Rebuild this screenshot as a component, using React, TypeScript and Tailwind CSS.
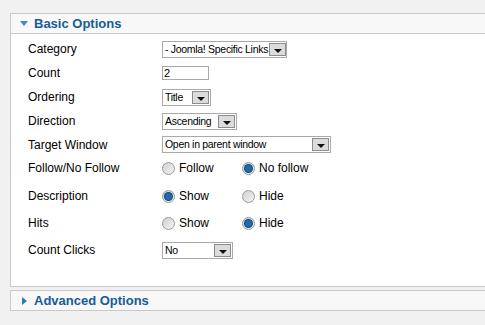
import React from 'react';

const font = { fontFamily: '"Liberation Sans", Arial, sans-serif' };

const Select: React.FC<{ value: string; width: string }> = ({ value, width }) => (
  <div className={`flex h-[17px] items-center justify-between border border-[#a9a9a9] bg-white pl-[2px] pr-[1px] ${width}`}>
    <span className="text-[10.5px] leading-[13px] tracking-[-0.3px] text-black whitespace-nowrap">{value}</span>
    <div className="ml-[1px] flex h-[13px] w-[17px] shrink-0 items-end justify-center border border-[#8c8c8c] bg-[#dcdcdc] pb-[2px]">
      <div className="h-0 w-0 border-x-[4px] border-t-[4px] border-x-transparent border-t-[#111]" />
    </div>
  </div>
);

const Radio: React.FC<{ checked?: boolean; label: string }> = ({ checked, label }) => (
  <div className="flex items-center gap-[4px]">
    <div className="flex h-[13px] w-[13px] items-center justify-center rounded-full border border-[#9a9a9a] bg-gradient-to-br from-[#d0d0d0] to-[#f4f4f4]">
      {checked && <div className="h-[7px] w-[7px] rounded-full bg-[#1f6aa8] ring-1 ring-[#0d4a7f]" />}
    </div>
    <span className="text-[12px] text-black">{label}</span>
  </div>
);

const Row: React.FC<{ label: string; h: string; children: React.ReactNode }> = ({ label, h, children }) => (
  <div className={`flex items-center ${h}`}>
    <div className="w-[151px] shrink-0 pl-[17px] text-[12px] text-black">{label}</div>
    {children}
  </div>
);

export default function App() {
  return (
    <div className="h-[325px] w-[485px] overflow-hidden bg-[#f1f1f1] pt-[13px]" style={font}>
      <div className="ml-[10px] w-[490px]">
        {/* Basic options panel */}
        <div className="border border-[#c9c9c9] bg-white">
          <div className="flex h-[20px] items-center border-b border-[#c9c9c9] bg-[#f8f8f8] pl-[9px]">
            <div className="mr-[6px] h-0 w-0 border-x-[4px] border-t-[5px] border-x-transparent border-t-[#3a8bc6]" />
            <span className="text-[13px] font-bold text-[#165c95]">Basic Options</span>
          </div>
          <div className="pt-[3px] pb-[20px]">
            <Row label="Category" h="h-[24px]"><Select value="- Joomla! Specific Links" width="w-[125px]" /></Row>
            <Row label="Count" h="h-[24px]">
              <div className="flex h-[14px] w-[47px] items-center border border-[#a9a9a9] bg-white pl-[1px] text-[11px]">2</div>
            </Row>
            <Row label="Ordering" h="h-[24px]"><Select value="Title" width="w-[49px]" /></Row>
            <Row label="Direction" h="h-[24px]"><Select value="Ascending" width="w-[75px]" /></Row>
            <Row label="Target Window" h="h-[23px]"><Select value="Open in parent window" width="w-[169px]" /></Row>
            <Row label="Follow/No Follow" h="h-[24px]">
              <div className="w-[80px]"><Radio label="Follow" /></div>
              <Radio checked label="No follow" />
            </Row>
            <Row label="Description" h="h-[32px]">
              <div className="w-[80px]"><Radio checked label="Show" /></div>
              <Radio label="Hide" />
            </Row>
            <Row label="Hits" h="h-[22px]">
              <div className="w-[80px]"><Radio label="Show" /></div>
              <Radio checked label="Hide" />
            </Row>
            <Row label="Count Clicks" h="h-[32px]"><Select value="No" width="w-[71px]" /></Row>
          </div>
        </div>

        {/* Advanced options panel */}
        <div className="mt-[3px] flex h-[21px] items-center border border-[#c9c9c9] bg-[#f8f8f8] pl-[11px]">
          <div className="mr-[7px] h-0 w-0 border-y-[4px] border-l-[5px] border-y-transparent border-l-[#2a7cb8]" />
          <span className="text-[13px] font-bold text-[#165c95]">Advanced Options</span>
        </div>
      </div>
    </div>
  );
}
